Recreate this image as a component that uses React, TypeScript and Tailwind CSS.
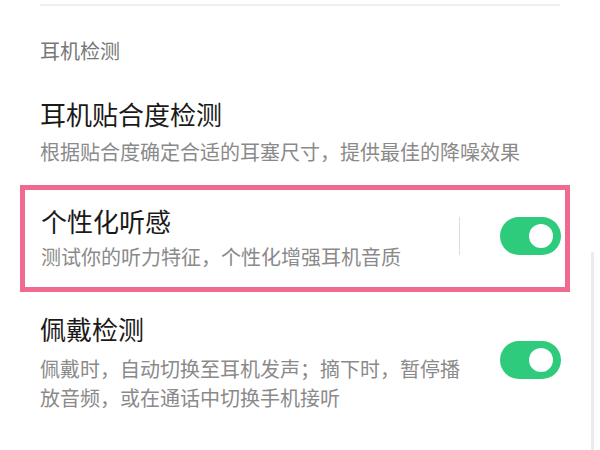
import React from "react";

function Toggle() {
  return (
    <div className="w-[61px] h-[38px] rounded-full bg-[#2dcb7b] flex items-center justify-end pr-[8px] shrink-0">
      <div className="w-[24px] h-[24px] rounded-full bg-white" />
    </div>
  );
}

export default function App() {
  return (
    <div className="relative w-[600px] h-[450px] overflow-hidden bg-white font-['Noto_Sans_CJK_SC','Noto_Sans',sans-serif]">
      {/* top divider */}
      <div className="mx-10 mt-1 h-[2px] bg-[#f0f0f0]" />

      <div className="ml-10 mt-[35px] text-[20px] leading-[20px] text-[#777777]">耳机检测</div>

      {/* row 1 */}
      <div className="ml-10 mt-[40px] text-[26px] leading-[26px] text-[#1a1a1a]">耳机贴合度检测</div>
      <div className="ml-10 mt-[15px] text-[20px] leading-[20px] text-[#8a8a8a]">
        根据贴合度确定合适的耳塞尺寸，提供最佳的降噪效果
      </div>

      {/* row 2, highlighted */}
      <div className="ml-5 mt-[23px] w-[550px] h-[107px] border-[5px] border-[#f0698f] flex items-start pl-4 pr-1">
        <div className="flex-1 pt-[18px]">
          <div className="text-[26px] leading-[26px] text-[#1a1a1a]">个性化听感</div>
          <div className="mt-[13px] text-[20px] leading-[20px] text-[#8a8a8a]">测试你的听力特征，个性化增强耳机音质</div>
        </div>
        <div className="mt-[27px] flex items-center gap-10">
          <div className="w-px h-[38px] bg-[#dddddd]" />
          <Toggle />
        </div>
      </div>

      {/* row 3 */}
      <div className="ml-10 mr-[39px] mt-[24px] flex items-start">
        <div className="w-[430px]">
          <div className="text-[26px] leading-[26px] text-[#1a1a1a]">佩戴检测</div>
          <div className="mt-[12px] text-[20px] leading-[29px] text-[#8a8a8a]">
            佩戴时，自动切换至耳机发声；摘下时，暂停播放音频，或在通话中切换手机接听
          </div>
        </div>
        <div className="ml-auto mt-[25px]">
          <Toggle />
        </div>
      </div>

      {/* scrollbar */}
      <div className="absolute right-[6px] top-[252px] bottom-0 w-[3px] bg-[#ebebeb]" />
    </div>
  );
}
